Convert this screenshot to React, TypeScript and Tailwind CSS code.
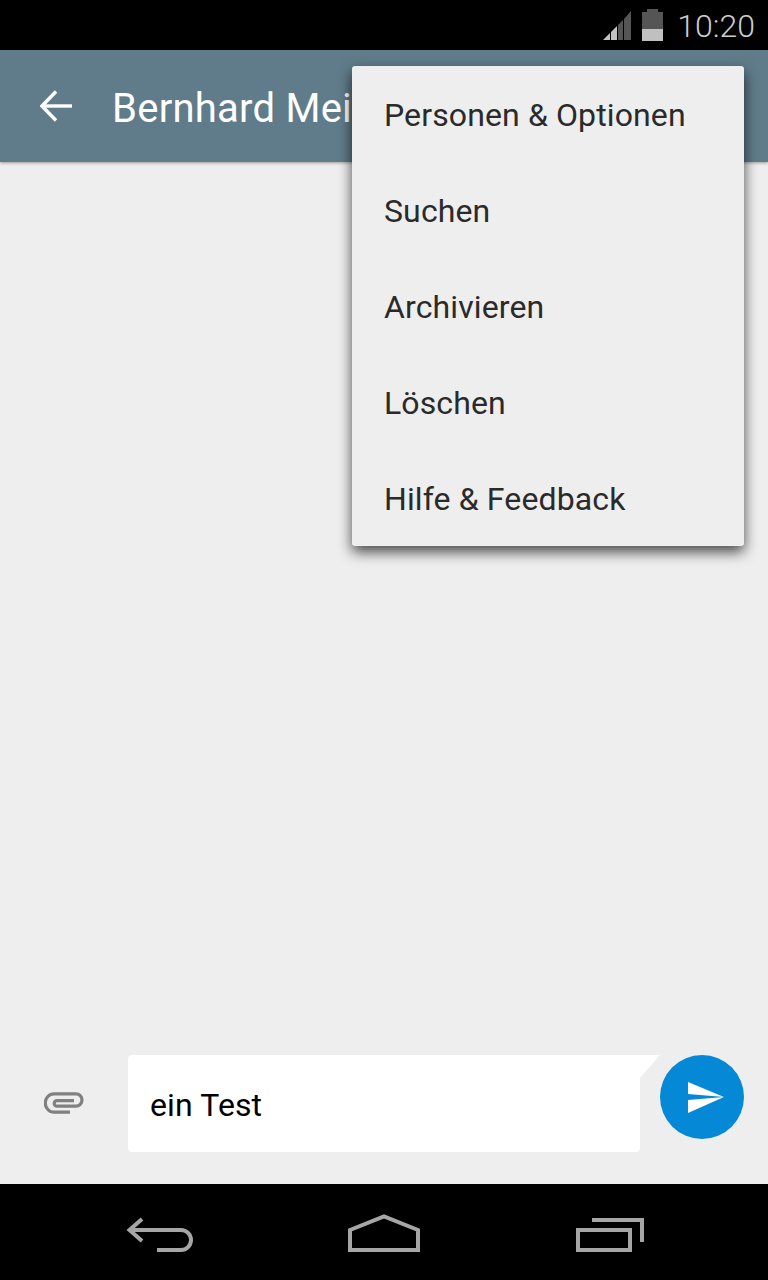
const items = ['Personen & Optionen', 'Suchen', 'Archivieren', 'Löschen', 'Hilfe & Feedback'];

function StatusBar() {
  return (
    <div className="flex h-[50px] items-center justify-end bg-black pr-[13px]">
      <svg width="28" height="31" viewBox="0 0 28 31" className="mb-[1px]">
        <polygon points="0,31 7,24 7,31" fill="#c4c4c4" />
        <polygon points="8,31 8,23 14,17 14,31" fill="#c4c4c4" />
        <polygon points="15,31 15,16 20,11 20,31" fill="#555555" />
        <polygon points="21,31 21,10 28,2 28,31" fill="#555555" />
      </svg>
      <svg width="21" height="32" viewBox="0 0 21 32" className="ml-[11px] mb-[1px]">
        <rect x="5" y="0" width="11" height="4" fill="#555555" />
        <rect x="0" y="3" width="21" height="17" fill="#555555" />
        <rect x="0" y="20" width="21" height="12" fill="#c0c0c0" />
      </svg>
      <span className="ml-[14px] pt-[1px] font-['Roboto',sans-serif] text-[32px] font-light leading-none text-[#cccccc]">10:20</span>
    </div>
  );
}

function Header() {
  return (
    <div className="flex h-[112px] items-center bg-[#607c8a] pl-[40px] shadow-[0_1px_3px_rgba(0,0,0,0.35)]">
      <svg width="32" height="32" viewBox="0 0 32 32" fill="none" stroke="#fff" strokeWidth="3.4">
        <path d="M32 16H3" />
        <path d="M16 1.5L2 16l14 14.5" />
      </svg>
      <span className="ml-[40px] pt-[5px] font-['Roboto',sans-serif] text-[40px] leading-none tracking-[0.25px] text-white">Bernhard Meier</span>
    </div>
  );
}

function Menu() {
  return (
    <div className="absolute left-[352px] top-[66px] w-[392px] rounded-[3px] bg-[#eeeeee] shadow-[0_6px_14px_rgba(0,0,0,0.7)]">
      {items.map((item) => (
        <div key={item} className="flex h-[96px] items-center pl-[32px] pt-[2px] font-['Roboto',sans-serif] text-[32px] tracking-[0.12px] text-[#2a2a2a]">
          {item}
        </div>
      ))}
    </div>
  );
}

function Composer() {
  return (
    <div className="flex h-[129px] items-start bg-[#eeeeee]">
      <div className="flex h-[97px] w-[128px] items-center pb-[2px] pl-[44px]">
        <svg width="40" height="22" viewBox="0 0 40 22" fill="none" stroke="#808080" strokeWidth="3.2">
          <path d="M26 20.2H10a8.7 9.2 0 0 1 0-18.4H32a6 6.2 0 0 1 0 12.4H13a2.8 2.8 0 0 1 0-5.6H30" />
        </svg>
      </div>
      <div className="flex h-[97px] w-[512px] items-center rounded-l-[4px] rounded-br-[4px] bg-white pl-[22px] pt-[2px] font-['Roboto',sans-serif] text-[32px] tracking-[0.12px] text-black">
        ein Test
      </div>
      <svg width="20" height="23" viewBox="0 0 20 23" className="shrink-0">
        <polygon points="0,0 20,0 0,23" fill="#fff" />
      </svg>
      <div className="flex h-[84px] w-[84px] items-center justify-center rounded-full bg-[#0588d6]">
        <svg width="36" height="31" viewBox="0 0 36 31" className="ml-2">
          <polygon points="0,0 36,15 0,12" fill="#fff" />
          <polygon points="0,31 36,15 0,18" fill="#fff" />
        </svg>
      </div>
    </div>
  );
}

function NavBar() {
  return (
    <div className="flex h-[96px] items-start bg-black pt-[30px]">
      <svg width="70" height="40" viewBox="0 0 70 40" fill="none" stroke="#a6a6a6" strokeWidth="4" className="ml-[125px]">
        <path d="M4 16H56a10 10 0 0 1 0 20H32" />
        <path d="M17 5L4.5 16 17 27" />
      </svg>
      <svg width="72" height="40" viewBox="0 0 72 40" fill="none" stroke="#a6a6a6" strokeWidth="4" className="ml-[153px]">
        <path d="M2 16L36 2.5 70 16V36H2z" />
      </svg>
      <svg width="68" height="40" viewBox="0 0 68 40" fill="none" stroke="#a6a6a6" strokeWidth="4" className="ml-[156px]">
        <rect x="2" y="16" width="52" height="20" />
        <path d="M16 6H66V28" />
      </svg>
    </div>
  );
}

export default function App() {
  return (
    <div className="relative flex h-[1280px] w-[768px] flex-col overflow-hidden bg-[#eeeeee]">
      <StatusBar />
      <Header />
      <div className="flex-1" />
      <Composer />
      <NavBar />
      <Menu />
    </div>
  );
}
